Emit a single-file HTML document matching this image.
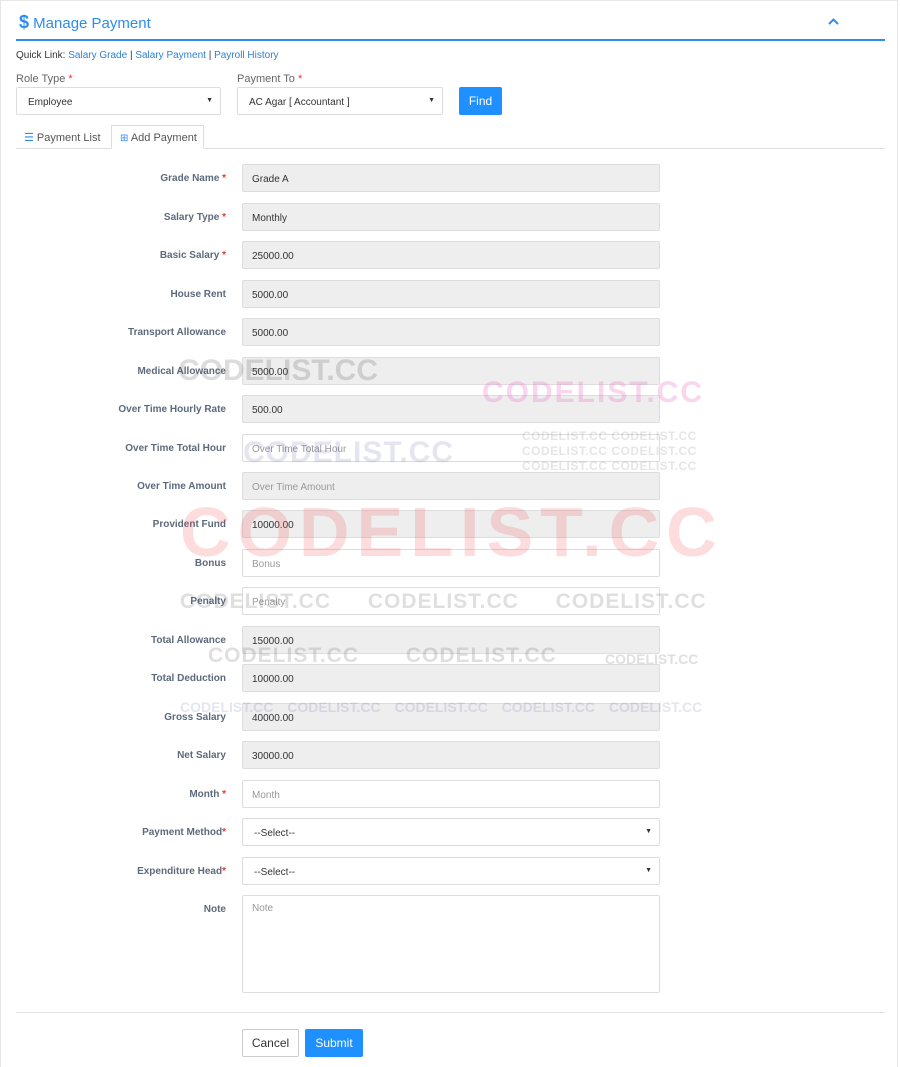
<!DOCTYPE html>
<html><head><meta charset="utf-8"><style>
*{box-sizing:border-box;margin:0;padding:0}
body{width:900px;height:1067px;background:#fff;font-family:"Liberation Sans",sans-serif;position:relative;overflow:hidden;color:#333}
.frame{position:absolute;left:0;top:0;width:898px;height:1067px;border:1px solid #e6e6e6;border-bottom:none}
.abs{position:absolute}
.lbl{position:absolute;left:60px;width:166px;text-align:right;font-size:10px;font-weight:bold;color:#5d6a7c}
.req{color:#e53935}
.fld{position:absolute;left:242px;width:418px;height:28px;border:1px solid #ddd;border-radius:2px;font-size:10px;padding:9px 9px 0;color:#333}
.ro{background:#eee}
.ph{color:#999;background:#fff}
.sel{position:absolute;height:28px;border:1px solid #ddd;border-radius:2px;font-size:10px;padding:9px 11px 0;background:#fff}
.sel:after{content:"▼";position:absolute;right:7px;top:9px;font-size:7px;color:#333}
.wm{position:absolute;font-weight:bold;white-space:nowrap}
</style></head><body>
<div class="frame"></div>
<div class="abs" style="left:19px;top:12px;font-size:15px;color:#2d8cf0"><b style="font-size:18px">$</b> Manage Payment</div>
<svg class="abs" style="left:828px;top:18px" width="11" height="8"><path d="M1 6 L5.5 1.5 L10 6" stroke="#2d8cf0" stroke-width="2" fill="none"/></svg>
<div class="abs" style="left:16px;top:39px;width:869px;height:2px;background:#2d8cf0"></div>
<div class="abs" style="left:16px;top:50px;font-size:10px;color:#333">Quick Link: <span style="color:#2d7fd0">Salary Grade</span> | <span style="color:#2d7fd0">Salary Payment</span> | <span style="color:#2d7fd0">Payroll History</span></div>
<div class="abs" style="left:16px;top:73px;font-size:11px;color:#666">Role Type <span class="req">*</span></div>
<div class="abs" style="left:237px;top:73px;font-size:11px;color:#666">Payment To <span class="req">*</span></div>
<div class="sel" style="left:16px;top:87px;width:205px">Employee</div>
<div class="sel" style="left:237px;top:87px;width:206px">AC Agar [ Accountant ]</div>
<div class="abs" style="left:459px;top:87px;width:43px;height:28px;background:#1e90ff;border-radius:2px;color:#fff;font-size:12px;text-align:center;line-height:28px">Find</div>
<div class="abs" style="left:16px;top:148px;width:869px;height:1px;background:#ddd"></div>
<div class="abs" style="left:24px;top:131px;font-size:11px;color:#555"><span style="color:#2d8cf0">☰</span> Payment List</div>
<div class="abs" style="left:111px;top:125px;width:93px;height:24px;border:1px solid #ddd;border-bottom:1px solid #fff;background:#fff;font-size:11px;color:#555;padding:6px 0 0 8px"><span style="color:#2d8cf0;font-size:10px">⊞</span> Add Payment</div>

<div class="lbl" style="top:173px">Grade Name <span class="req">*</span></div><div class="fld ro" style="top:164px">Grade A</div>
<div class="lbl" style="top:212px">Salary Type <span class="req">*</span></div><div class="fld ro" style="top:203px">Monthly</div>
<div class="lbl" style="top:250px">Basic Salary <span class="req">*</span></div><div class="fld ro" style="top:241px">25000.00</div>
<div class="lbl" style="top:289px">House Rent</div><div class="fld ro" style="top:280px">5000.00</div>
<div class="lbl" style="top:327px">Transport Allowance</div><div class="fld ro" style="top:318px">5000.00</div>
<div class="lbl" style="top:366px">Medical Allowance</div><div class="fld ro" style="top:357px">5000.00</div>
<div class="lbl" style="top:404px">Over Time Hourly Rate</div><div class="fld ro" style="top:395px">500.00</div>
<div class="lbl" style="top:443px">Over Time Total Hour</div><div class="fld ph" style="top:434px">Over Time Total Hour</div>
<div class="lbl" style="top:481px">Over Time Amount</div><div class="fld ro" style="top:472px;color:#999">Over Time Amount</div>
<div class="lbl" style="top:519px">Provident Fund</div><div class="fld ro" style="top:510px">10000.00</div>
<div class="lbl" style="top:558px">Bonus</div><div class="fld ph" style="top:549px">Bonus</div>
<div class="lbl" style="top:596px">Penalty</div><div class="fld ph" style="top:587px">Penalty</div>
<div class="lbl" style="top:635px">Total Allowance</div><div class="fld ro" style="top:626px">15000.00</div>
<div class="lbl" style="top:673px">Total Deduction</div><div class="fld ro" style="top:664px">10000.00</div>
<div class="lbl" style="top:712px">Gross Salary</div><div class="fld ro" style="top:703px">40000.00</div>
<div class="lbl" style="top:750px">Net Salary</div><div class="fld ro" style="top:741px">30000.00</div>
<div class="lbl" style="top:789px">Month <span class="req">*</span></div><div class="fld ph" style="top:780px">Month</div>
<div class="lbl" style="top:827px">Payment Method<span class="req">*</span></div><div class="sel" style="left:242px;top:818px;width:418px">--Select--</div>
<div class="lbl" style="top:866px">Expenditure Head<span class="req">*</span></div><div class="sel" style="left:242px;top:857px;width:418px">--Select--</div>
<div class="lbl" style="top:904px">Note</div><div class="fld ph" style="top:895px;height:98px;padding-top:7px">Note</div>
<div class="abs" style="left:16px;top:1012px;width:869px;height:1px;background:#e3e3e3"></div>
<div class="abs" style="left:242px;top:1029px;width:57px;height:28px;border:1px solid #ccc;border-radius:2px;font-size:12px;text-align:center;line-height:26px;color:#333">Cancel</div>
<div class="abs" style="left:305px;top:1029px;width:58px;height:28px;background:#1e90ff;border-radius:2px;font-size:12px;text-align:center;line-height:28px;color:#fff">Submit</div>

<div class="wm" style="left:180px;top:492px;font-size:70px;letter-spacing:7px;color:rgba(240,80,80,0.2)">CODELIST.CC</div>
<div class="wm" style="left:482px;top:376px;font-size:30px;letter-spacing:2px;color:rgba(240,120,200,0.3)">CODELIST.CC</div>
<div class="wm" style="left:178px;top:354px;font-size:30px;color:rgba(80,80,80,0.2)">CODELIST.CC</div>
<div class="wm" style="left:243px;top:436px;font-size:30px;letter-spacing:1px;color:rgba(80,80,160,0.15)">CODELIST.CC</div>
<div class="wm" style="left:522px;top:429px;font-size:12px;line-height:15px;letter-spacing:0.5px;color:rgba(80,80,80,0.15)">CODELIST.CC CODELIST.CC<br>CODELIST.CC CODELIST.CC<br>CODELIST.CC CODELIST.CC</div>
<div class="wm" style="left:180px;top:590px;font-size:21px;letter-spacing:1px;color:rgba(80,80,80,0.18);word-spacing:30px">CODELIST.CC CODELIST.CC CODELIST.CC</div>
<div class="wm" style="left:208px;top:644px;font-size:21px;letter-spacing:1px;color:rgba(80,80,80,0.18);word-spacing:40px">CODELIST.CC CODELIST.CC</div>
<div class="wm" style="left:605px;top:651px;font-size:14px;color:rgba(80,80,80,0.18)">CODELIST.CC</div>
<div class="wm" style="left:180px;top:699px;font-size:14px;color:rgba(80,80,160,0.15);word-spacing:10px">CODELIST.CC CODELIST.CC CODELIST.CC CODELIST.CC CODELIST.CC</div>
</body></html>
